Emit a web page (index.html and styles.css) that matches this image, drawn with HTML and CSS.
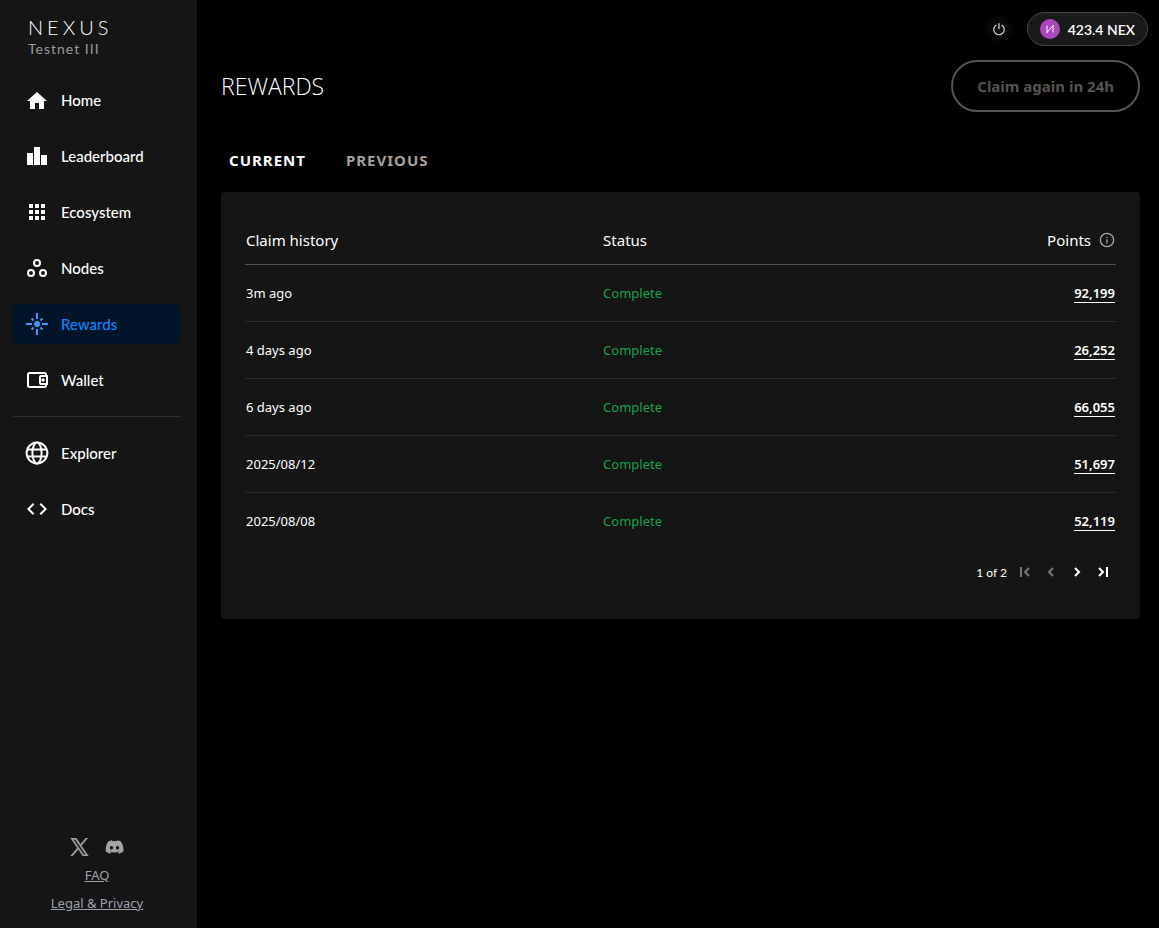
FILE: index.html
```html
<!DOCTYPE html>
<html lang="en">
  <head>
    <meta charset="utf-8">
    <meta name="viewport" content="width=device-width, initial-scale=1">
    <title>Rewards</title>
    <link rel="stylesheet" href="styles.css">
  </head>
  <body>
    <div class="app">
      <aside class="sidebar">
        <div class="brand">
          <div class="brand-name">NEXUS</div>
          <div class="brand-net">Testnet III</div>
        </div>
        <nav class="nav">
          <a class="nav-item" href="#">
            <svg viewBox="0 0 24 24"><path d="M10 21v-6h4v6h5v-8h3L12 4 2 13h3v8z"/></svg>
            Home
          </a>
          <a class="nav-item" href="#">
            <svg viewBox="0 0 24 24"><path d="M2 9h6v12H2zM9 3h6v18H9zM16 11h6v10h-6z"/></svg>
            Leaderboard
          </a>
          <a class="nav-item" href="#">
            <svg viewBox="0 0 24 24"><path d="M4 8h4V4H4zm6 12h4v-4h-4zm-6 0h4v-4H4zm0-6h4v-4H4zm6 0h4v-4h-4zm6-10v4h4V4zm-6 4h4V4h-4zm6 6h4v-4h-4zm0 6h4v-4h-4z"/></svg>
            Ecosystem
          </a>
          <a class="nav-item" href="#">
            <svg class="line" viewBox="0 0 24 24"><circle cx="12" cy="7" r="3"/><circle cx="6" cy="17" r="3"/><circle cx="18" cy="17" r="3"/></svg>
            Nodes
          </a>
          <a class="nav-item active" href="#">
            <svg class="line" viewBox="0 0 24 24"><circle class="dot" cx="12" cy="12" r="3"/><path d="M12 1v6M12 17v6M1 12h6M17 12h6M6.500 6.500l2 2M15.500 15.500l2 2M17.500 6.500l-2 2M8.500 15.500l-2 2"/></svg>
            Rewards
          </a>
          <a class="nav-item" href="#">
            <svg viewBox="0 0 24 24"><path class="wallet" d="M21 8V6.500A1.500 1.500 0 0 0 19.500 5h-15A1.500 1.500 0 0 0 3 6.500v11A1.500 1.500 0 0 0 4.500 19h15a1.500 1.500 0 0 0 1.500-1.500V16M22 8h-6a1 1 0 0 0-1 1v6a1 1 0 0 0 1 1h6z"/><circle cx="18" cy="12" r="1.800"/></svg>
            Wallet
          </a>
          <hr class="nav-line">
          <a class="nav-item" href="#">
            <svg class="line" viewBox="0 0 24 24"><circle cx="12" cy="12" r="10.400"/><ellipse cx="12" cy="12" rx="4.600" ry="10.400"/><path d="M2.500 8.500h19M2.500 15.500h19"/></svg>
            Explorer
          </a>
          <a class="nav-item" href="#">
            <svg viewBox="0 0 24 24"><path d="M9.400 16.600L4.800 12l4.600-4.600L8 6l-6 6 6 6zm5.200 0l4.600-4.600-4.600-4.600L16 6l6 6-6 6z"/></svg>
            Docs
          </a>
        </nav>
        <div class="links">
          <div class="social">
            <a href="#" aria-label="X">
              <svg class="x-logo" viewBox="0 0 24 24"><path d="M14.200 10.200L22.800 0h-2l-7.500 8.800L7.300 0H.4l9.100 13.300L.4 24h2l8-9.300 6.300 9.300h6.900zm-2.900 3.300l-.9-1.300L3.200 1.600h3.100l6 8.500.9 1.300 7.700 11.100h-3.100z"/></svg>
            </a>
            <a href="#" aria-label="Discord">
              <svg viewBox="0 0 24 24"><path d="M20.300 4.400A19.800 19.800 0 0 0 15.400 2.900c-.2.400-.4.900-.6 1.300a18.300 18.300 0 0 0-5.500 0c-.2-.4-.4-.9-.6-1.300-1.700.3-3.400.8-4.900 1.500C.7 9-.1 13.600.3 18.100a19.900 19.900 0 0 0 6 3c.5-.6.9-1.300 1.200-2-.6-.3-1.300-.6-1.800-.9l.4-.3a14.200 14.200 0 0 0 12 0l.4.300c-.6.300-1.200.6-1.800.9.300.7.7 1.400 1.200 2a19.900 19.900 0 0 0 6-3c.5-5.200-.8-9.700-3.600-13.700zM8 15.300c-1.200 0-2.200-1.100-2.200-2.400S6.800 10.500 8 10.500s2.200 1.100 2.200 2.400S9.200 15.300 8 15.300zm8 0c-1.200 0-2.200-1.100-2.200-2.400s1-2.400 2.200-2.400 2.200 1.100 2.200 2.400-1 2.400-2.200 2.400z"/></svg>
            </a>
          </div>
          <a href="#">FAQ</a>
          <a href="#">Legal &amp; Privacy</a>
        </div>
      </aside>

      <main class="main">
        <header class="topbar">
          <button class="power" type="button" aria-label="Disconnect">
            <svg viewBox="0 0 24 24"><path d="M12 2v10M7.500 5a9 9 0 1 0 9 0"/></svg>
          </button>
          <button class="balance" type="button">
            <span class="coin">
              <svg viewBox="0 0 20 20"><path d="M7 14V6.500M7 13.500l6-7M13 6v7.500"/></svg>
            </span>
            423.4 NEX
          </button>
        </header>

        <div class="heading">
          <h1>REWARDS</h1>
          <button class="claim" type="button" disabled>Claim again in 24h</button>
        </div>

        <div class="tabs">
          <button class="tab selected" type="button">CURRENT</button>
          <button class="tab" type="button">PREVIOUS</button>
        </div>

        <section class="card">
          <table class="history">
            <thead>
              <tr>
                <th>Claim history</th>
                <th>Status</th>
                <th>
                  <span class="points-head">Points
                    <svg viewBox="0 0 24 24"><circle cx="12" cy="12" r="10"/><path d="M12 11v6M12 7v2"/></svg>
                  </span>
                </th>
              </tr>
            </thead>
            <tbody>
              <tr><td>3m ago</td><td>Complete</td><td><a href="#">92,199</a></td></tr>
              <tr><td>4 days ago</td><td>Complete</td><td><a href="#">26,252</a></td></tr>
              <tr><td>6 days ago</td><td>Complete</td><td><a href="#">66,055</a></td></tr>
              <tr><td>2025/08/12</td><td>Complete</td><td><a href="#">51,697</a></td></tr>
              <tr><td>2025/08/08</td><td>Complete</td><td><a href="#">52,119</a></td></tr>
            </tbody>
          </table>
          <div class="pager">
            <span class="pager-text">1 of 2</span>
            <button type="button" aria-label="First page" disabled><svg viewBox="0 0 16 16"><path d="M4 3v10M12 4L8 8l4 4"/></svg></button>
            <button type="button" aria-label="Previous page" disabled><svg viewBox="0 0 16 16"><path d="M10 4L6 8l4 4"/></svg></button>
            <button type="button" aria-label="Next page"><svg viewBox="0 0 16 16"><path d="M6 4l4 4-4 4"/></svg></button>
            <button type="button" aria-label="Last page"><svg viewBox="0 0 16 16"><path d="M12 3v10M4 4l4 4-4 4"/></svg></button>
          </div>
        </section>
      </main>
    </div>
  </body>
</html>
```
FILE: styles.css
```css
* {
  box-sizing: border-box;
}

body {
  margin: 0;
  background: #000;
  color: #fff;
  font-family: "Noto Sans", "Open Sans", sans-serif;
  font-size: 14px;
}

button {
  padding: 0;
  border: none;
  background: none;
  color: inherit;
  font-family: inherit;
}

.app {
  display: flex;
  min-height: 100vh;
}

.sidebar {
  display: flex;
  flex-direction: column;
  flex: 0 0 17%;
  padding: 14px 16px 15px 13px;
  background: #151515;
}

.brand {
  height: 66px;
  padding-left: 15px;
  font-family: Lato, sans-serif;
}

.brand-name {
  font-size: 20px;
  font-weight: 300;
  line-height: 26px;
  letter-spacing: 4px;
}

.brand-net {
  color: #999;
  font-size: 14px;
  line-height: 18px;
  letter-spacing: 1px;
}

.nav {
  display: flex;
  flex-direction: column;
  gap: 16px;
}

.nav-item {
  display: flex;
  align-items: center;
  gap: 12px;
  height: 40px;
  padding: 0 12px;
  border-radius: 8px;
  color: #fff;
  font-family: Lato, sans-serif;
  font-size: 15px;
  font-weight: 500;
  text-decoration: none;
}

.nav-item svg {
  width: 24px;
  height: 24px;
  fill: currentColor;
}

.nav-item .line,
.nav-item .wallet {
  fill: none;
  stroke: currentColor;
  stroke-width: 2;
}

.nav-item .dot {
  fill: currentColor;
  stroke: none;
}

.nav-item.active {
  background: #001529;
  color: #1283ff;
}

.nav-item.active svg {
  color: #4096ff;
}

.nav-line {
  width: 100%;
  margin: 0;
  border: none;
  border-top: 1px solid #303030;
}

.links {
  display: flex;
  flex-direction: column;
  align-items: center;
  gap: 8px;
  margin-top: auto;
}

.links a {
  color: #9ca3af;
  font-size: 13px;
  line-height: 20px;
}

.social {
  display: flex;
  gap: 16px;
}

.social a {
  display: flex;
  align-items: center;
  height: 20px;
}

.social svg {
  width: 19px;
  height: 18px;
  fill: #a3a3a3;
}

.social .x-logo {
  stroke: #a3a3a3;
}

.main {
  flex: 1;
  padding: 0 19px 24px 24px;
}

.topbar {
  display: flex;
  align-items: center;
  justify-content: flex-end;
  gap: 12px;
  height: 58px;
  margin-right: -8px;
}

.power {
  display: flex;
  align-items: center;
  justify-content: center;
  width: 32px;
  height: 32px;
  border-radius: 50%;
  background: radial-gradient(#151515, #000 70%);
}

.power svg {
  width: 14px;
  height: 14px;
  fill: none;
  stroke: #ddd;
  stroke-width: 2;
}

.balance {
  display: flex;
  align-items: center;
  gap: 8px;
  height: 34px;
  padding: 0 12px;
  border: 1px solid #444;
  border-radius: 17px;
  background: #1a1a1a;
  font-family: Lato, sans-serif;
  font-size: 14px;
  font-weight: 600;
}

.coin {
  width: 20px;
  height: 20px;
  border-radius: 50%;
  background: #ab47bc;
}

.coin svg {
  display: block;
  fill: none;
  stroke: #fff;
}

.heading {
  display: flex;
  align-items: center;
  justify-content: space-between;
  padding-top: 2px;
}

h1 {
  margin: 0;
  font-family: "Open Sans", sans-serif;
  font-size: 23px;
  font-weight: 300;
}

.claim {
  height: 52px;
  padding: 0 24px;
  border: 2px solid #57534e;
  border-radius: 26px;
  color: #57534e;
  font-size: 15px;
  font-weight: 700;
}

.tabs {
  display: flex;
  gap: 40px;
  padding: 36px 8px 20px;
}

.tab {
  color: #a8a29e;
  font-size: 15px;
  font-weight: 700;
  line-height: 24px;
  letter-spacing: 1px;
}

.tab.selected {
  color: #fff;
}

.card {
  padding: 24px;
  border-radius: 4px;
  background: #151515;
}

.history {
  width: 100%;
  border-collapse: collapse;
  table-layout: fixed;
}

.history th {
  height: 48px;
  padding: 0 1px;
  border-bottom: 1px solid #525252;
  font-size: 15px;
  font-weight: 400;
  text-align: left;
}

.history th:nth-child(1) {
  width: 41%;
}

.history td {
  height: 57px;
  padding: 0 1px;
  border-bottom: 1px solid #2b2b2b;
  font-size: 13px;
}

.history tr:last-child td {
  border-bottom: none;
}

.history td:nth-child(2) {
  color: #16a34a;
}

.history th:last-child,
.history td:last-child {
  text-align: right;
}

.history a {
  border-bottom: 1px solid #fff;
  color: #fff;
  font-weight: 600;
  text-decoration: none;
}

.points-head {
  display: inline-flex;
  align-items: center;
  gap: 8px;
}

.points-head svg {
  width: 16px;
  height: 16px;
  fill: none;
  stroke: #a3a3a3;
  stroke-width: 2;
}

.pager {
  display: flex;
  align-items: center;
  justify-content: flex-end;
  gap: 10px;
  height: 46px;
  padding-right: 5px;
}

.pager-text {
  font-family: Lato, sans-serif;
  font-size: 12px;
}

.pager button {
  width: 16px;
  height: 16px;
}

.pager button:disabled {
  color: #777;
}

.pager svg {
  display: block;
  fill: none;
  stroke: currentColor;
  stroke-width: 2;
}
```
